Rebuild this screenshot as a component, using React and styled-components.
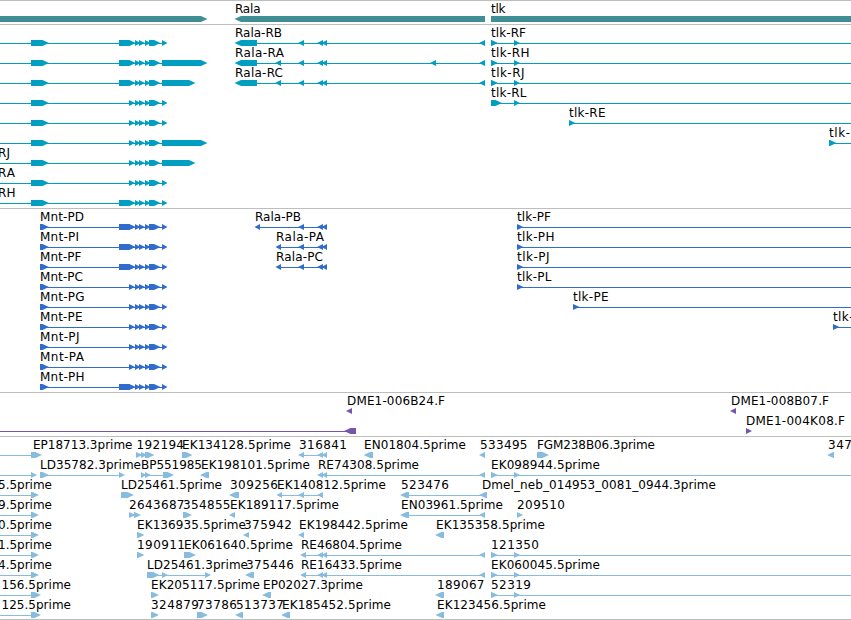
import React from "react";
import styled, { createGlobalStyle } from "styled-components";

const GlobalStyle = createGlobalStyle`
    body {
        margin: 0;
        background: white;
        overflow: hidden;
    }
`;

const Viewer = styled.main`
    display: flex;
    flex-direction: column;
    width: 851px;
    height: 620px;
    box-sizing: border-box;
    border-top: 1px solid #bebebe;
    overflow: hidden;
`;

const Track = styled.section`
    display: flex;
    flex-direction: column;
    box-sizing: border-box;
    flex: none;
    height: ${(props) => props.$height}px;
    border-bottom: 1px solid #bebebe;
    color: ${(props) => props.$color};
`;

const Lane = styled.svg`
    display: block;
    flex: none;
    width: 851px;
    height: 20px;
    overflow: visible;
`;

const Connector = styled.rect`
    fill: currentColor;
    shape-rendering: crispEdges;
`;

const Exon = styled.polygon`
    fill: currentColor;
`;

const Label = styled.text`
    fill: black;
    font-family: "DejaVu Sans", sans-serif;
    font-size: 12px;
    white-space: pre;
`;

// [label, label start, label end, direction, exons, line start, line end]
const EDGE = 851;
const RIGHT = 1;
const LEFT = -1;

const mntTail = [
    [129, 134.5],
    [135, 140],
    [139, 144.5],
    [145, 150],
    [149, 160],
];

const mntRna = (label, end, long, last) => [
    label,
    -2,
    end,
    RIGHT,
    [[31, 48.5], ...(long ? [[119, 135]] : []), ...mntTail, [162, last]],
    0,
    162,
];

const mntProtein = (label, end, long) => [
    label,
    40,
    end,
    RIGHT,
    [[40, 48.5], ...(long ? [[119, 135]] : []), ...mntTail, [162, 167]],
];

const pair = [
    [317.5, 323],
    [322, 327],
];
const tlkStart = [
    [491, 497.5],
    [514, 519.5],
];

const est = (label, start, end, tip) => [
    label,
    start,
    end,
    RIGHT,
    [[31, tip]],
    0,
    31,
];

const genes = [
    [
        ["", 0, 0, RIGHT, [[-10, 207]]],
        ["Rala", 235, 260.5, LEFT, [[235, 485]]],
        ["tlk", 491, 505.5, RIGHT, [[491, 870]]],
    ],
];

const transcripts = [
    [
        mntRna("", 0, true, 167),
        ["Rala-RB", 235, 282, LEFT, [[235, 257], [298.5, 304], ...pair, [479.5, 485]]],
        ["tlk-RF", 491, 526, RIGHT, tlkStart, 491, EDGE],
    ],
    [
        mntRna("", 0, true, 207),
        [
            "Rala-RA",
            235,
            284,
            LEFT,
            [[235, 257], [275.5, 281], [298.5, 304], ...pair, [430.5, 436], [479.5, 485]],
        ],
        ["tlk-RH", 491, 529.5, RIGHT, tlkStart, 491, EDGE],
    ],
    [
        mntRna("", 0, true, 195),
        [
            "Rala-RC",
            235,
            283,
            LEFT,
            [[235, 257], [275.5, 281], [298.5, 304], ...pair, [479.5, 485]],
        ],
        ["tlk-RJ", 491, 524.5, RIGHT, tlkStart, 491, EDGE],
    ],
    [
        mntRna("", 0, false, 167),
        ["tlk-RL", 491, 526.5, RIGHT, [[491, 501.5], [514, 519.5]], 491, EDGE],
    ],
    [
        mntRna("", 0, false, 167),
        ["tlk-RE", 569, 605.5, RIGHT, [[569, 575]], 569, EDGE],
    ],
    [
        mntRna("", 0, false, 207),
        ["tlk-", 829, 850, RIGHT, [[829, 836]], 829, EDGE],
    ],
    [mntRna("RJ", 10, false, 195)],
    [mntRna("RA", 15, false, 167)],
    [mntRna("RH", 15.5, true, 167)],
];

const proteins = [
    [
        mntProtein("Mnt-PD", 84, true),
        ["Rala-PB", 255, 301, LEFT, [[255, 260], [298.5, 304], ...pair]],
        ["tlk-PF", 517, 551, RIGHT, [[517, 523]], 517, EDGE],
    ],
    [
        mntProtein("Mnt-PI", 79, true),
        ["Rala-PA", 276, 324, LEFT, [[276, 281], [298.5, 304], ...pair]],
        ["tlk-PH", 517, 554.5, RIGHT, [[517, 523]], 517, EDGE],
    ],
    [
        mntProtein("Mnt-PF", 81.5, true),
        ["Rala-PC", 276, 323, LEFT, [[276, 281], [298.5, 304], ...pair]],
        ["tlk-PJ", 517, 549.5, RIGHT, [[517, 523]], 517, EDGE],
    ],
    [
        mntProtein("Mnt-PC", 83, false),
        ["tlk-PL", 517, 551.5, RIGHT, [[517, 523]], 517, EDGE],
    ],
    [
        mntProtein("Mnt-PG", 84.5, false),
        ["tlk-PE", 573, 608.5, RIGHT, [[573, 579]], 573, EDGE],
    ],
    [
        mntProtein("Mnt-PE", 82.5, false),
        ["tlk-", 833, 853.5, RIGHT, [[833, 839]], 833, EDGE],
    ],
    [mntProtein("Mnt-PJ", 79.5, false)],
    [mntProtein("Mnt-PA", 84, false)],
    [mntProtein("Mnt-PH", 84.5, true)],
];

const insertions = [
    [
        ["DME1-006B24.F", 347, 445, LEFT, [[346.5, 352]]],
        ["DME1-008B07.F", 731, 829, LEFT, [[730.5, 736]]],
    ],
    [
        ["", 0, 0, LEFT, [[344.5, 356]], 0, 350],
        ["DME1-004K08.F", 746, 845, RIGHT, [[746, 751.5]]],
    ],
];

const ests = [
    [
        est("EP18713.3prime", 33, 132.5, 41.5),
        ["192194", 136.5, 184, RIGHT, [[136, 142], [141, 147], [145, 154]]],
        ["EK134128.5prime", 182, 291, RIGHT, [[182, 192]]],
        ["316841", 299, 347, LEFT, [[298.5, 304], ...pair]],
        ["EN01804.5prime", 364, 466, LEFT, [[364, 373]]],
        ["533495", 480, 527.5, LEFT, [[479.5, 485]]],
        ["FGM238B06.3prime", 537, 655, RIGHT, [[537, 548.5]]],
        ["347", 828, 852, LEFT, [[827.5, 834]]],
    ],
    [
        est("", 0, 0, 36.5),
        ["LD35782.3prime", 40, 141, RIGHT, [[40, 48.5], [119, 124.5]]],
        ["BP551985", 141, 202, RIGHT, [[141, 146], [145, 150.5], [163, 173.5]]],
        ["EK198101.5prime", 201, 310, LEFT, [[200.5, 209]]],
        ["RE74308.5prime", 318, 419, LEFT, [...pair, [479.5, 485]]],
        ["EK098944.5prime", 491, 600, RIGHT, tlkStart, 491, EDGE],
    ],
    [
        est("5.5prime", -2, 52, 38.5),
        ["LD25461.5prime", 121, 222, RIGHT, [[121, 133.5]]],
        ["309256", 230, 278, LEFT, [[229.5, 239]]],
        ["EK140812.5prime", 277, 386, LEFT, [[277, 282], [298.5, 304], [317.5, 323]]],
        ["523476", 401, 449, LEFT, [[400.5, 409], [479.5, 487]]],
        ["Dmel_neb_014953_0081_0944.3prime", 482, 716, RIGHT, []],
    ],
    [
        est("9.5prime", -2, 52, 38.5),
        ["2643687", 129, 184.5, RIGHT, [[129, 135], [134, 140.5]]],
        ["354855", 183, 230.5, RIGHT, [[183, 191.5]]],
        ["EK189117.5prime", 230, 339, LEFT, [[229.5, 235]]],
        ["EN03961.5prime", 401, 503, LEFT, [[400.5, 409], [479.5, 485]]],
        ["209510", 517, 565, RIGHT, [[517, 522.5]]],
    ],
    [
        est("0.5prime", -2, 52, 38.5),
        ["EK136935.5prime", 137, 246, RIGHT, [[137, 144]]],
        ["375942", 244, 292, LEFT, [[243.5, 249]]],
        ["EK198442.5prime", 299, 408, LEFT, [[298.5, 304]]],
        ["EK135358.5prime", 436, 545, LEFT, [[435.5, 444]]],
    ],
    [
        est("1.5prime", -2, 52, 38.5),
        ["190911", 137, 185, RIGHT, [[137, 144]]],
        ["EK061640.5prime", 184, 293, RIGHT, [[184, 195.5]]],
        ["RE46804.5prime", 301, 402, LEFT, [[300.5, 306], ...pair, [479.5, 485]]],
        ["121350", 491, 539, RIGHT, tlkStart, 491, EDGE],
    ],
    [
        est("4.5prime", -2, 52, 38.5),
        ["LD25461.3prime", 147, 248, RIGHT, [[147, 159], [162, 167.5], [205, 210.5]]],
        ["375446", 246, 294, LEFT, [[245.5, 254]]],
        ["RE16433.5prime", 301, 402, LEFT, [[300.5, 306], ...pair, [479.5, 485]]],
        ["EK060045.5prime", 491, 600, RIGHT, tlkStart, 491, EDGE],
    ],
    [
        est("156.5prime", 1.5, 71, 40.5),
        ["EK205117.5prime", 151, 260, RIGHT, [[151, 158.5]]],
        ["EP02027.3prime", 263, 363, LEFT, [[262.5, 271]]],
        ["189067", 437, 484.5, LEFT, [[435.5, 444]]],
        ["52319", 491, 531, RIGHT, tlkStart, 491, EDGE],
    ],
    [
        est("125.5prime", 1.5, 71, 40.5),
        ["324879", 151, 199, RIGHT, [[151, 158.5]]],
        ["73786", 197, 237, RIGHT, [[197, 207.5]]],
        ["513737", 236, 284, LEFT, [[235.5, 243]]],
        ["EK185452.5prime", 282, 391, LEFT, [[281.5, 290]]],
        ["EK123456.5prime", 437, 546, LEFT, [[436, 444]]],
    ],
];

const tracks = [
    { name: "genes", color: "#3f8e94", height: 24, lanes: genes },
    { name: "transcripts", color: "#009ec0", height: 184, lanes: transcripts },
    { name: "proteins", color: "#306ccc", height: 184, lanes: proteins },
    { name: "insertions", color: "#7557a9", height: 44, lanes: insertions },
    { name: "ests", color: "#87bcde", height: 183, lanes: ests },
];

// Block with a pointed end, 6px tall
const exonPoints = (start, end, direction) => {
    const head = Math.min(end - start, 6);
    const [back, neck, tip] =
        direction === RIGHT
            ? [start, end - head, end + 0.5]
            : [end, start + head, start - 0.5];
    return `${back},15 ${neck},15 ${tip},18 ${neck},21 ${back},21`;
};

const Feature = ({ data }) => {
    const [label, labelStart, labelEnd, direction, exons, from, to] = data;
    const lineStart = from ?? exons[0]?.[0] + 2;
    const lineEnd = to ?? exons[exons.length - 1]?.[1] - 2;
    const hasLine = from !== undefined || exons.length > 1;

    return (
        <g>
            {hasLine && (
                <Connector x={lineStart} y={18} width={lineEnd - lineStart} height={1} />
            )}
            {exons.map(([start, end]) => (
                <Exon key={start} points={exonPoints(start, end, direction)} />
            ))}
            {label && (
                <Label x={labelStart} y={12} textLength={labelEnd - labelStart}>
                    {label}
                </Label>
            )}
        </g>
    );
};

const App = () => {
    return (
        <>
            <GlobalStyle />
            <Viewer>
                {tracks.map(({ name, color, height, lanes }) => (
                    <Track key={name} $color={color} $height={height}>
                        {lanes.map((features, lane) => (
                            <Lane key={lane}>
                                {features.map((data, i) => (
                                    <Feature key={i} data={data} />
                                ))}
                            </Lane>
                        ))}
                    </Track>
                ))}
            </Viewer>
        </>
    );
};

export default App;
